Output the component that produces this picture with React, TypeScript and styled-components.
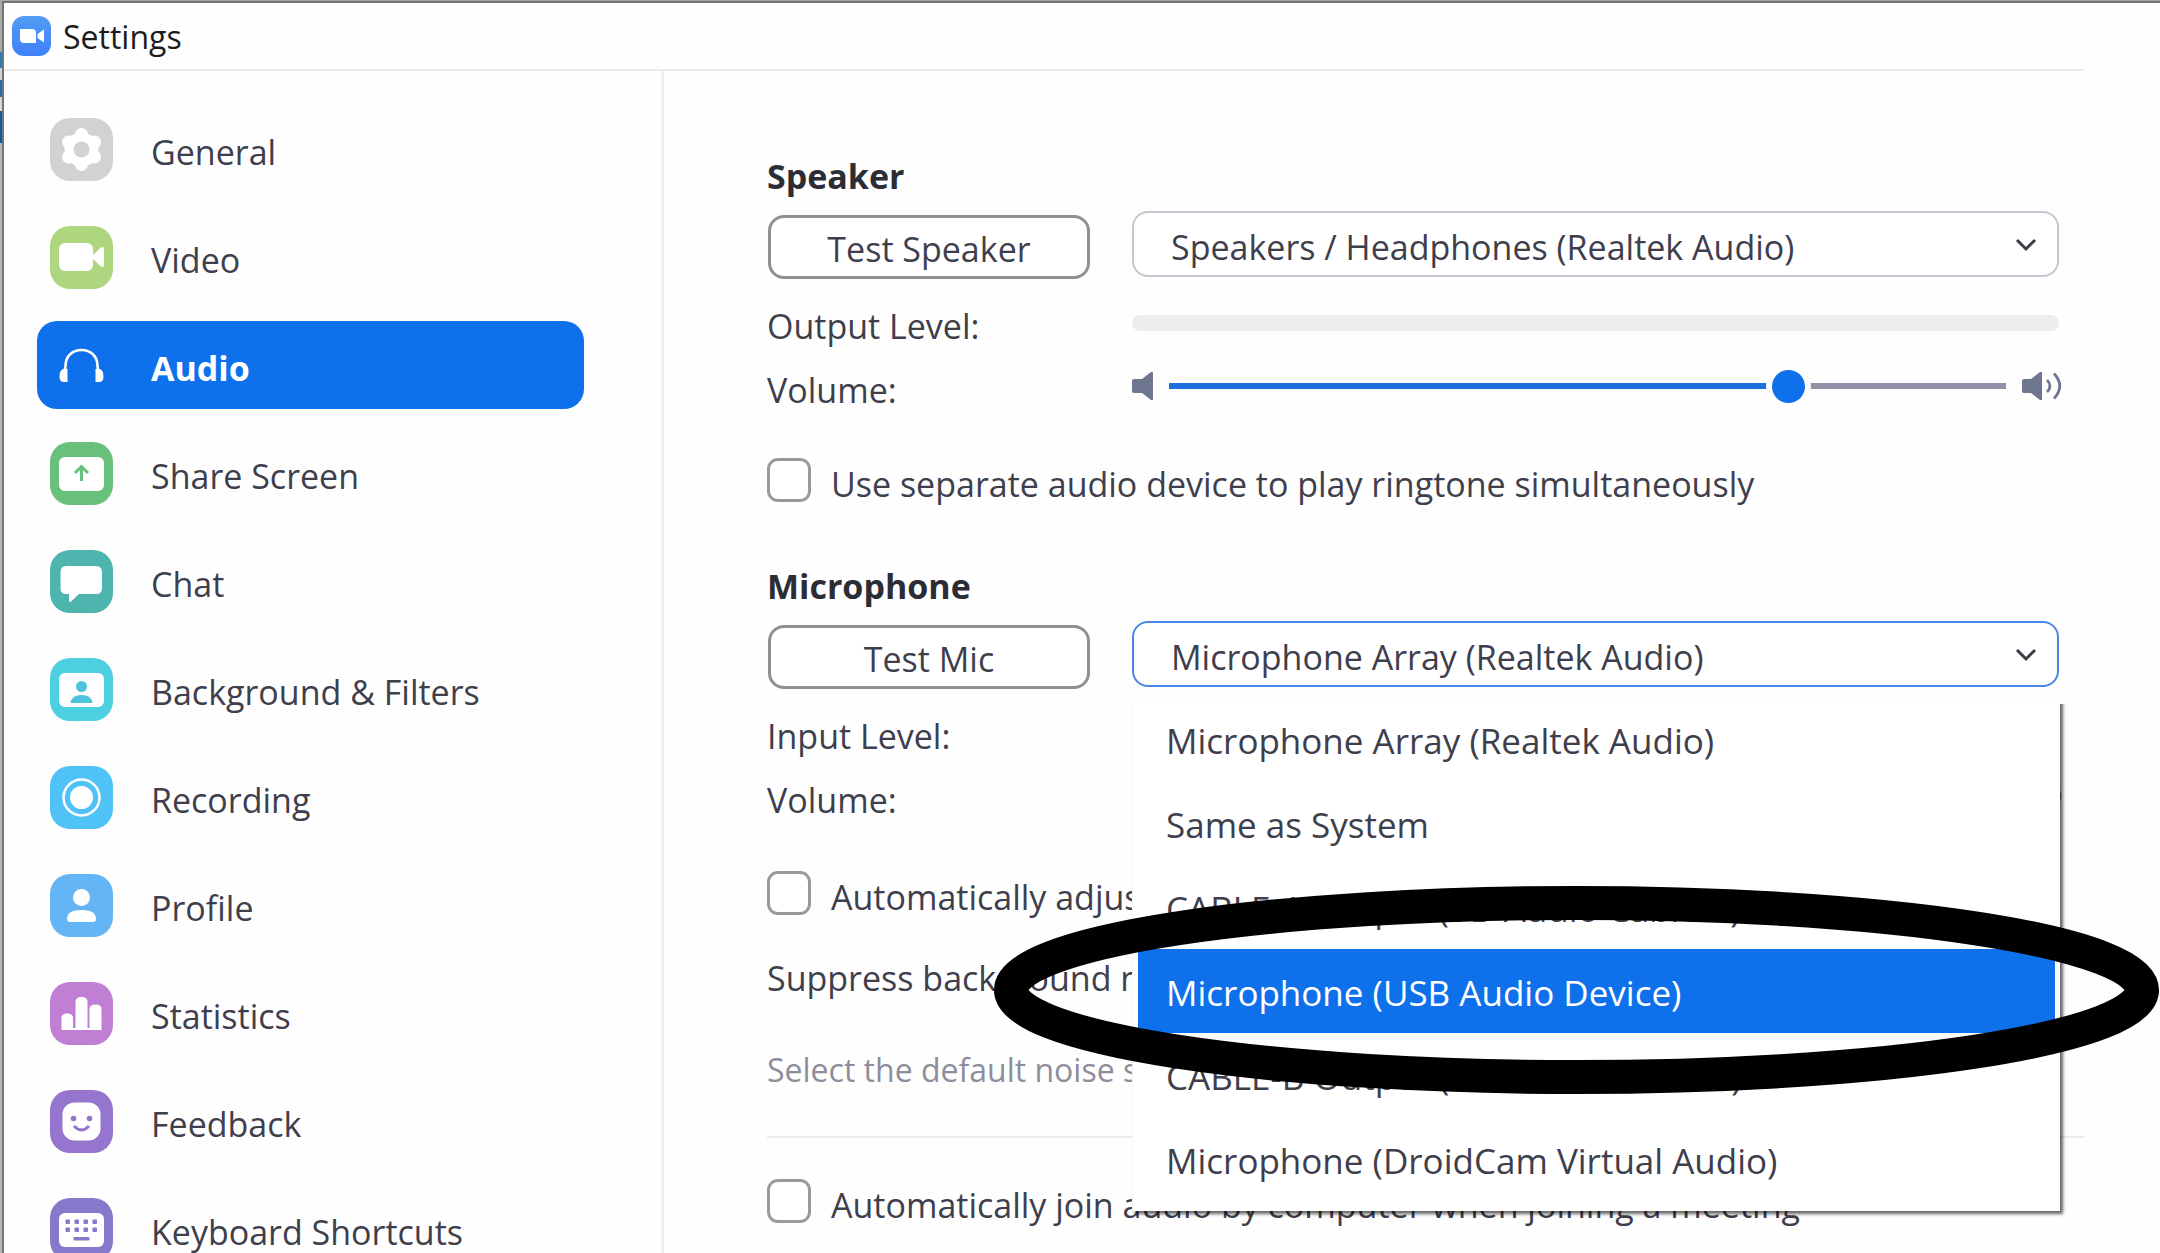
import React, { useState } from "react";
import styled, { createGlobalStyle } from "styled-components";

const GlobalStyle = createGlobalStyle`
  *, *::before, *::after { box-sizing: border-box; }
  body { margin: 0; background: #fff; overflow: hidden; }
  button, select, input { font: inherit; color: inherit; }
`;

const Desktop = styled.div`
  height: 100vh;
  overflow: hidden;
  padding: 1px 0 0 2px;
  background: linear-gradient(
    #a8a8a8 0 52px, #1f82c0 52px 68px, #d0d0d0 68px 80px, #1b70b8 80px 97px,
    #d8d8d8 97px 111px, #0d5aa6 111px 143px, #b8b8b8 143px
  );
  font-family: "Open Sans", "Noto Sans", sans-serif;
  font-size: 34px;
  line-height: 48px;
  color: #3e3e4c;
`;

const Window = styled.div`
  display: flex;
  flex-direction: column;
  min-height: 100%;
  padding-right: 76px;
  border-left: 2px solid #757575;
  border-top: 2px solid #757575;
  background: #fefefe;
`;

const TitleBar = styled.header`
  display: flex;
  align-items: center;
  gap: 12px;
  height: 68px;
  padding-left: 8px;
  border-bottom: 2px solid #ebebeb;
  color: #1c1c1c;
`;

const Title = styled.h1`
  margin: 0;
  padding-top: 2px;
  font-size: 32px;
  font-weight: 400;
`;

const Body = styled.div`
  display: flex;
  flex: 1;
`;

const Sidebar = styled.nav`
  display: flex;
  flex-direction: column;
  flex: none;
  gap: 20px;
  width: 660px;
  padding: 34px 77px 0 33px;
  border-right: 3px solid #f0f0f0;
`;

const NavItem = styled.button<{ $active?: boolean }>`
  display: flex;
  align-items: center;
  gap: 38px;
  height: 88px;
  padding: 0 13px;
  border: 0;
  border-radius: 20px;
  background: ${(p) => (p.$active ? "#0e71eb" : "transparent")};
  color: ${(p) => (p.$active ? "#fff" : "inherit")};
  font-weight: ${(p) => (p.$active ? 700 : 400)};
  text-align: left;
  white-space: nowrap;
  svg { flex: none; }
`;

const NavLabel = styled.span`
  padding-top: 6px;
`;

const Main = styled.main`
  flex: 1;
  min-width: 0;
  padding: 81px 0 0 103px;
  white-space: nowrap;
`;

const Section = styled.section`
  display: grid;
  grid-template-columns: 324px minmax(0, 1fr);
  column-gap: 41px;
  padding-right: 25px;
  & + & { margin-top: 54px; }
`;

const Heading = styled.h2`
  grid-column: 1 / -1;
  margin: 0 0 11px;
  font-size: inherit;
  font-weight: 700;
  color: #2c2c34;
`;

const TestButton = styled.button`
  align-self: end;
  height: 64px;
  margin: 0 1px;
  padding: 4px 0 0;
  border: 3px solid #909090;
  border-radius: 16px;
  background: #fff;
  line-height: 48px;
`;

const Picker = styled.div`
  position: relative;
  height: 68px;
`;

const Select = styled.select<{ $focus?: boolean }>`
  appearance: none;
  display: block;
  width: 100%;
  height: 66px;
  padding: 5px 90px 0 37px;
  border: 2px solid ${(p) => (p.$focus ? "#4a86e8" : "#c6c6d0")};
  border-radius: 16px;
  outline: 0;
  background: #fff;
`;

const Chevron = styled.svg`
  position: absolute;
  top: 27px;
  right: 22px;
  pointer-events: none;
`;

const RowLabel = styled.label<{ $gap: number }>`
  margin-top: ${(p) => p.$gap}px;
`;

const LevelMeter = styled.div`
  align-self: end;
  height: 16px;
  margin-bottom: 19px;
  border-radius: 8px;
  background: #ededed;
`;

const VolumeRow = styled.div`
  display: flex;
  align-items: center;
  align-self: end;
  height: 48px;
  margin-right: -3px;
  margin-bottom: 4px;
  svg { flex: none; }
`;

const Range = styled.input<{ $value: number }>`
  appearance: none;
  flex: 1;
  min-width: 0;
  height: 34px;
  margin: 0 16px;
  background: linear-gradient(to right, #1a70dc ${(p) => p.$value}%, #9490a6 ${(p) => p.$value}%) center / 100% 6px no-repeat;
  &::-webkit-slider-thumb {
    appearance: none;
    width: 33px;
    height: 33px;
    border-radius: 50%;
    background: #0e71eb;
    box-shadow: 0 0 0 6px #fefefe;
  }
`;

const CheckRow = styled.label<{ $gap: number }>`
  display: flex;
  align-items: flex-start;
  grid-column: 1 / -1;
  gap: 20px;
  height: 50px;
  margin-top: ${(p) => p.$gap}px;
`;

const CheckBox = styled.input`
  appearance: none;
  flex: none;
  width: 44px;
  height: 44px;
  margin: 0;
  border: 3px solid #9a9a9a;
  border-radius: 11px;
  background: #fff;
  &:checked { background: #0e71eb; }
`;

const CheckText = styled.span`
  padding-top: 2px;
`;

const Setting = styled.p`
  grid-column: 1 / -1;
  margin: 33px 0 0;
`;

const Hint = styled.p`
  grid-column: 1 / -1;
  margin: 44px 0 0;
  font-size: 32px;
  color: #8d8d9b;
`;

const Divider = styled.hr`
  height: 2px;
  margin: 42px 0 0;
  border: 0;
  background: #ebebeb;
`;

const Menu = styled.ul`
  position: absolute;
  z-index: 1;
  top: 71px;
  left: 0;
  width: calc(100% + 1px);
  margin: 0;
  padding: 5px;
  padding-bottom: 10px;
  border-left: 1px solid #f2f2f2;
  background: #fff;
  box-shadow: 3px 3px 3px rgba(0, 0, 0, 0.6);
  clip-path: inset(12px -10px -10px 0);
  font-size: 35px;
  list-style: none;
`;

const MenuItem = styled.li<{ $selected?: boolean }>`
  height: 84px;
  padding: 20px 28px 0;
  background: ${(p) => (p.$selected ? "#0e71eb" : "transparent")};
  color: ${(p) => (p.$selected ? "#fff" : "inherit")};
`;

const Callout = styled.svg`
  position: absolute;
  z-index: 2;
  top: 265px;
  left: -138px;
  width: calc(100% + 238px);
  height: 208px;
  pointer-events: none;
  ellipse {
    rx: calc(50% - 17px);
    ry: calc(50% - 17px);
  }
`;

const Tile = ({ color, children }: { color: string; children: React.ReactNode }) => (
  <svg width="63" height="63" viewBox="0 0 63 63" aria-hidden="true">
    <rect width="63" height="63" rx="20" fill={color} />
    {children}
  </svg>
);

const GearIcon = () => (
  <Tile color="#d2d2d2">
    <g fill="#fff">
      {[0, 60, 120, 180, 240, 300].map((a) => (
        <circle key={a} cx="31.5" cy="16.5" r="6.5" transform={`rotate(${a} 31.5 31.5)`} />
      ))}
      <circle cx="31.5" cy="31.5" r="17" />
    </g>
    <circle cx="31.5" cy="31.5" r="8" fill="#d2d2d2" />
  </Tile>
);

const VideoIcon = () => (
  <Tile color="#aed67e">
    <rect x="9" y="17" width="34" height="28" rx="6" fill="#fff" />
    <path d="M43 29 L51 21.500 Q54 20 54 23 V39 Q54 42 51 40.500 L43 33 Z" fill="#fff" />
  </Tile>
);

const AudioIcon = () => (
  <svg width="63" height="63" viewBox="0 0 63 63" aria-hidden="true">
    <path d="M13 39 C14 37 15.500 36 15.500 32 C15.500 22 22.500 16 31.500 16 C40.500 16 47.500 22 47.500 32 C47.500 36 49 37 50 39" fill="none" stroke="#fff" strokeWidth="2.600" />
    <path d="M17.500 35 V48 H14 Q9.500 48 9.500 42.500 Q9.500 35 15 34.500 Z M45.500 35 V48 H49 Q53.500 48 53.500 42.500 Q53.500 35 48 34.500 Z" fill="#fff" />
  </svg>
);

const ShareIcon = () => (
  <Tile color="#69c07a">
    <rect x="9" y="15" width="45" height="34" rx="6" fill="#fff" />
    <path d="M31.500 39 V25 M25 31 L31.500 24.500 L38 31" fill="none" stroke="#69c07a" strokeWidth="3" />
  </Tile>
);

const ChatIcon = () => (
  <Tile color="#4db5ad">
    <path d="M16 16 H46 Q52 16 52 22 V38 Q52 44 46 44 H29 L21 51.500 Q19 53 19 50 V44 H16 Q10.500 44 10.500 38 V22 Q10.500 16 16 16 Z" fill="#fff" />
  </Tile>
);

const BackgroundIcon = () => (
  <Tile color="#4dd0e1">
    <rect x="9" y="15" width="45" height="34" rx="6" fill="#fff" />
    <circle cx="31.500" cy="28.500" r="5.500" fill="#4dc3dc" />
    <path d="M20.500 45 Q21.500 37 31.500 37 Q41.500 37 42.500 45 Z" fill="#4dc3dc" />
  </Tile>
);

const RecordIcon = () => (
  <Tile color="#4fc3f7">
    <circle cx="31.500" cy="31.500" r="18" fill="none" stroke="#fff" strokeWidth="2.500" />
    <circle cx="31.500" cy="31.500" r="11.500" fill="#fff" />
  </Tile>
);

const ProfileIcon = () => (
  <Tile color="#64b5f6">
    <circle cx="31.500" cy="23.500" r="8.500" fill="#fff" />
    <path d="M17 45 Q17 36 31.500 36 Q46 36 46 45 Q46 48 43 48 H20 Q17 48 17 45 Z" fill="#fff" />
  </Tile>
);

const StatsIcon = () => (
  <Tile color="#c07fd3">
    <path d="M11.500 48 V36 Q11.500 31.500 17 31.500 Q23 31.500 23 36 V46 H25.500 V20 Q25.500 15 31.500 15 Q37.500 15 37.500 20 V46 H39.500 V27 Q39.500 22.500 45.500 22.500 Q51.500 22.500 51.500 27 V48 Z" fill="#fff" />
  </Tile>
);

const FeedbackIcon = () => (
  <Tile color="#9575cd">
    <rect x="12.500" y="12.500" width="38" height="38" rx="12" fill="#fff" />
    <circle cx="23.500" cy="28.500" r="2.800" fill="#9575cd" />
    <circle cx="39.500" cy="28.500" r="2.800" fill="#9575cd" />
    <path d="M24 36 Q31.500 44 39 36" fill="none" stroke="#9575cd" strokeWidth="2.800" />
  </Tile>
);

const KeyboardIcon = () => (
  <Tile color="#8878cb">
    <rect x="9" y="15" width="45" height="34" rx="6" fill="#fff" />
    <g fill="#8878cb">
      {[15.5, 24.5, 33.5, 42.5].map((x) => (
        <React.Fragment key={x}>
          <rect x={x} y="21.500" width="4.500" height="4.500" rx="1" />
          <rect x={x} y="29.500" width="4.500" height="4.500" rx="1" />
        </React.Fragment>
      ))}
      <rect x="23.500" y="39" width="16" height="3.500" rx="1" />
    </g>
  </Tile>
);

const AppLogo = () => (
  <svg width="39" height="40" viewBox="0 0 39 40" aria-hidden="true">
    <defs>
      <linearGradient id="logo" x1="0" y1="0" x2="0" y2="1">
        <stop offset="0" stopColor="#519cf4" />
        <stop offset="1" stopColor="#4080fa" />
      </linearGradient>
    </defs>
    <rect width="39" height="40" rx="12" fill="url(#logo)" />
    <path d="M8 13 H20 Q24 13 24 17 V27 H12 Q8 27 8 23 Z M25.500 18 L32 13.500 V26.500 L25.500 22 Z" fill="#fff" />
  </svg>
);

const SpeakerLow = () => (
  <svg width="21" height="28" viewBox="0 0 21 28" aria-hidden="true">
    <path d="M2 7 H10 L19 0 H21 V28 H19 L10 21 H2 Q0 21 0 19 V9 Q0 7 2 7 Z" fill="#6e7690" />
  </svg>
);

const SpeakerHigh = () => (
  <svg width="40" height="28" viewBox="0 0 40 28" aria-hidden="true">
    <path d="M2 7 H9 L18 0 H20 V28 H18 L9 21 H2 Q0 21 0 19 V9 Q0 7 2 7 Z" fill="#6e7690" />
    <path d="M25 8 Q31 14 25 20 M32 1.500 Q43.500 14 32 26.500" fill="none" stroke="#6e7690" strokeWidth="2.800" />
  </svg>
);

const navItems = [
  { label: "General", Icon: GearIcon },
  { label: "Video", Icon: VideoIcon },
  { label: "Audio", Icon: AudioIcon },
  { label: "Share Screen", Icon: ShareIcon },
  { label: "Chat", Icon: ChatIcon },
  { label: "Background & Filters", Icon: BackgroundIcon },
  { label: "Recording", Icon: RecordIcon },
  { label: "Profile", Icon: ProfileIcon },
  { label: "Statistics", Icon: StatsIcon },
  { label: "Feedback", Icon: FeedbackIcon },
  { label: "Keyboard Shortcuts", Icon: KeyboardIcon },
];

const microphones = [
  "Microphone Array (Realtek Audio)",
  "Same as System",
  "CABLE-A Output (VB-Audio Cable A)",
  "Microphone (USB Audio Device)",
  "CABLE-B Output (VB-Audio Cable B)",
  "Microphone (DroidCam Virtual Audio)",
];

function DevicePicker({ name, options, focus, children }: { name: string; options: string[]; focus?: boolean; children?: React.ReactNode }) {
  return (
    <Picker>
      <Select aria-label={name} $focus={focus}>
        {options.map((o) => (
          <option key={o}>{o}</option>
        ))}
      </Select>
      <Chevron width="22" height="14" viewBox="0 0 22 14" aria-hidden="true">
        <path d="M2 2 L11 11 L20 2" fill="none" stroke="#3c3c46" strokeWidth="3" />
      </Chevron>
      {children}
    </Picker>
  );
}

function Volume({ id }: { id: string }) {
  const [value, setValue] = useState(75);
  return (
    <>
      <RowLabel $gap={16} htmlFor={id}>Volume:</RowLabel>
      <VolumeRow>
        <SpeakerLow />
        <Range id={id} type="range" $value={value} value={value} onChange={(e) => setValue(Number(e.target.value))} />
        <SpeakerHigh />
      </VolumeRow>
    </>
  );
}

function Check({ gap, children }: { gap: number; children: React.ReactNode }) {
  return (
    <CheckRow $gap={gap}>
      <CheckBox type="checkbox" />
      <CheckText>{children}</CheckText>
    </CheckRow>
  );
}

export default function App() {
  const [page, setPage] = useState("Audio");
  return (
    <Desktop>
      <GlobalStyle />
      <Window>
        <TitleBar>
          <AppLogo />
          <Title>Settings</Title>
        </TitleBar>
        <Body>
          <Sidebar>
            {navItems.map(({ label, Icon }) => (
              <NavItem key={label} $active={label === page} onClick={() => setPage(label)}>
                <Icon />
                <NavLabel>{label}</NavLabel>
              </NavItem>
            ))}
          </Sidebar>
          <Main>
            <Section>
              <Heading>Speaker</Heading>
              <TestButton>Test Speaker</TestButton>
              <DevicePicker name="Speaker" options={["Speakers / Headphones (Realtek Audio)"]} />
              <RowLabel as="div" $gap={23}>Output Level:</RowLabel>
              <LevelMeter />
              <Volume id="speaker-volume" />
              <Check gap={44}>Use separate audio device to play ringtone simultaneously</Check>
            </Section>
            <Section>
              <Heading>Microphone</Heading>
              <TestButton>Test Mic</TestButton>
              <DevicePicker name="Microphone" options={microphones} focus>
                <Menu role="listbox" aria-label="Microphones">
                  {microphones.map((m, i) => (
                    <MenuItem key={m} role="option" aria-selected={i === 3} $selected={i === 3}>{m}</MenuItem>
                  ))}
                </Menu>
                <Callout aria-hidden="true">
                  <ellipse cx="50%" cy="50%" fill="none" stroke="#000" strokeWidth="34" />
                </Callout>
              </DevicePicker>
              <RowLabel as="div" $gap={23}>Input Level:</RowLabel>
              <LevelMeter />
              <Volume id="microphone-volume" />
              <Check gap={47}>Automatically adjust microphone volume</Check>
              <Setting>Suppress background noise</Setting>
              <Hint>Select the default noise suppression level</Hint>
            </Section>
            <Divider />
            <Check gap={41}>Automatically join audio by computer when joining a meeting</Check>
          </Main>
        </Body>
      </Window>
    </Desktop>
  );
}
